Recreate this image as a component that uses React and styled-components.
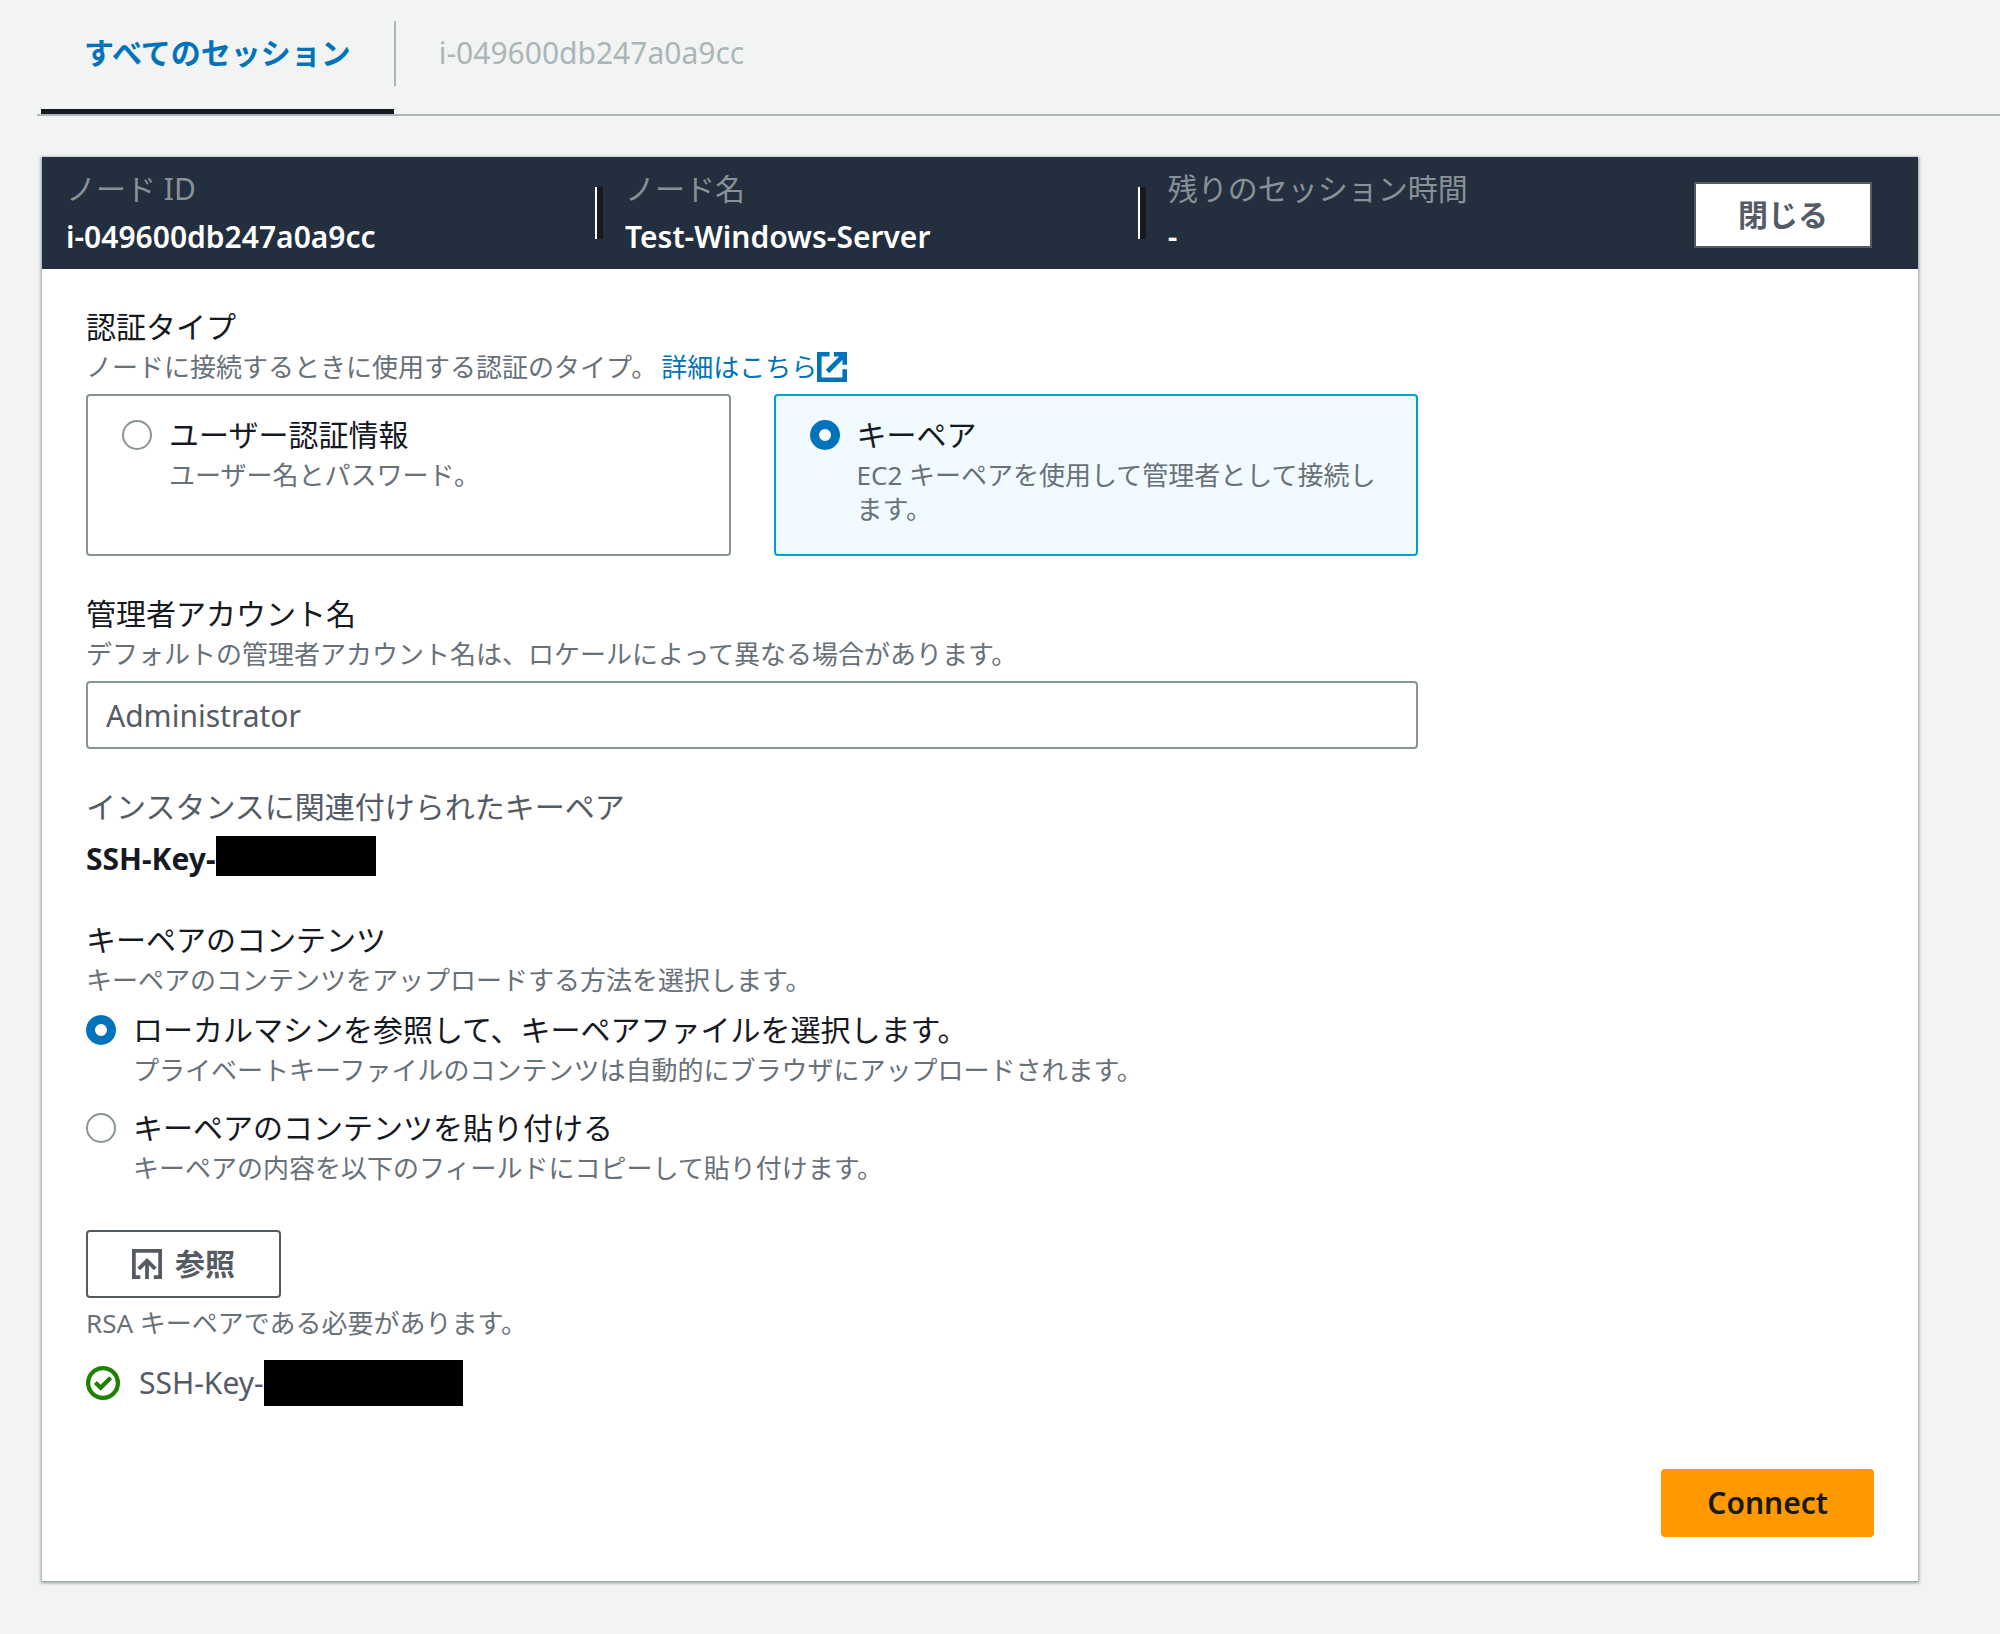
import React, { useState } from "react";
import styled, { createGlobalStyle } from "styled-components";

const palette = {
  page: "#f2f3f3",
  navy: "#232f3e",
  ink: "#16191f",
  body: "#545b64",
  muted: "#687078",
  line: "#aab7b8",
  field: "#879596",
  link: "#0073bb",
  select: "#00a1c9",
  selectBg: "#f1faff",
  orange: "#ff9900",
  green: "#1d8102",
};

const GlobalStyle = createGlobalStyle`
  * {
    box-sizing: border-box;
  }
  body {
    margin: 0;
    background: ${palette.page};
    color: ${palette.ink};
    font-family: "Noto Sans", "Noto Sans CJK JP", sans-serif;
    font-size: 30px;
    line-height: 46px;
  }
  button,
  input {
    font: inherit;
  }
`;

const Page = styled.div`
  min-height: 100vh;
  padding-bottom: 52px;
`;

const TabBar = styled.nav`
  display: flex;
  margin-left: 37px;
  padding-left: 4px;
  border-bottom: 2px solid ${palette.line};
`;

const Tab = styled.button`
  height: 114px;
  padding: 0 43px 3px;
  border: 0;
  border-bottom: 5px solid ${(props) => (props.$active ? palette.ink : "transparent")};
  background: none;
  color: ${(props) => (props.$active ? palette.link : palette.line)};
  font-weight: ${(props) => (props.$active ? 700 : 400)};
`;

const TabDivider = styled.span`
  width: 2px;
  height: 65px;
  margin-top: 21px;
  background: ${palette.line};
`;

const Panel = styled.section`
  margin: 41px 82px 0 42px;
  background: #fff;
  box-shadow: 0 1px 3px 1px rgba(0, 28, 36, 0.4);
`;

const PanelHeader = styled.header`
  display: grid;
  grid-template-columns: 39fr 40fr 41fr auto;
  align-items: center;
  height: 112px;
  padding: 0 46px 0 24px;
  background: ${palette.navy};
`;

const NodeItem = styled.div`
  display: flex;
  align-items: center;
  line-height: 48px;
`;

const Separator = styled.span`
  width: 8px;
  height: 52px;
  margin-right: 22px;
  border-left: 2px solid #fff;
  background: ${palette.ink};
`;

const NodeLabel = styled.div`
  color: #879196;
`;

const NodeValue = styled.div`
  color: #fff;
  font-weight: 600;
`;

const Button = styled.button`
  display: inline-flex;
  align-items: center;
  justify-content: center;
  gap: 13px;
  height: 68px;
  padding: 0 44px;
  border: 2px solid ${(props) => (props.$primary ? palette.orange : palette.body)};
  border-radius: 4px;
  background: ${(props) => (props.$primary ? palette.orange : "#fff")};
  color: ${(props) => (props.$primary ? palette.ink : palette.body)};
  font-weight: 600;
`;

const CloseButton = styled(Button)`
  height: 66px;
  margin-top: 4px;
  padding: 0 42px;
  border-radius: 0;
`;

const Form = styled.form`
  display: flex;
  flex-direction: column;
  padding: 35px 44px 44px;
`;

const Field = styled.div`
  width: 100%;
  max-width: 1332px;
  margin-bottom: 35px;
`;

const Title = styled.div`
  color: ${(props) => (props.$muted ? palette.body : palette.ink)};
`;

const Hint = styled.div`
  color: ${palette.muted};
  font-size: 26px;
  line-height: 34px;
`;

const HelpLink = styled.a`
  display: inline-flex;
  align-items: center;
  margin-left: 4px;
  color: ${palette.link};
  text-decoration: none;
`;

const Cards = styled.div`
  display: grid;
  grid-template-columns: 1fr 1fr;
  gap: 43px;
  margin-top: 10px;
`;

const Card = styled.label`
  display: flex;
  gap: 17px;
  min-height: 162px;
  padding: 16px 34px;
  border: 2px solid ${(props) => (props.$checked ? palette.select : palette.field)};
  border-radius: 4px;
  background: ${(props) => (props.$checked ? palette.selectBg : "#fff")};
`;

const Choice = styled.label`
  display: flex;
  gap: 17px;
  margin-top: ${(props) => (props.$first ? 10 : 18)}px;
`;

const Radio = styled.input.attrs({ type: "radio" })`
  appearance: none;
  flex: none;
  width: 30px;
  height: 30px;
  margin: 8px 0 0;
  border: 2px solid ${palette.field};
  border-radius: 50%;
  background: #fff;
  &:checked {
    border: 9px solid ${palette.link};
  }
`;

const TextInput = styled.input`
  display: block;
  width: 100%;
  height: 68px;
  margin-top: 10px;
  padding: 0 18px;
  border: 2px solid ${palette.field};
  border-radius: 4px;
  color: ${palette.body};
`;

const KeyName = styled.div`
  display: flex;
  margin-top: 6px;
  font-weight: 700;
`;

const Mask = styled.span`
  width: ${(props) => props.$width}px;
  height: ${(props) => props.$height}px;
  background: #000;
`;

const Upload = styled.div`
  display: flex;
  flex-direction: column;
  align-items: flex-start;
  gap: 8px;
  margin-top: 10px;
`;

const FileRow = styled.div`
  display: flex;
  align-items: center;
  margin-top: 20px;
  color: ${palette.body};
  svg {
    margin-right: 19px;
  }
`;

const Actions = styled.div`
  display: flex;
  justify-content: flex-end;
  margin-top: 63px;
`;

const Icon = styled.svg.attrs({ viewBox: "0 0 16 16", "aria-hidden": true })`
  flex: none;
  width: ${(props) => props.$size || 30}px;
  height: ${(props) => props.$size || 30}px;
  fill: none;
  stroke: currentColor;
  stroke-width: 2;
`;

const GreenIcon = styled(Icon)`
  color: ${palette.green};
`;

const nodeItems = [
  { label: "ノード ID", value: "i-049600db247a0a9cc" },
  { label: "ノード名", value: "Test-Windows-Server" },
  { label: "残りのセッション時間", value: "-" },
];

const authTypes = [
  { id: "user", title: "ユーザー認証情報", hint: "ユーザー名とパスワード。" },
  {
    id: "key",
    title: "キーペア",
    hint: "EC2 キーペアを使用して管理者として接続します。",
  },
];

const keySources = [
  {
    id: "file",
    title: "ローカルマシンを参照して、キーペアファイルを選択します。",
    hint: "プライベートキーファイルのコンテンツは自動的にブラウザにアップロードされます。",
  },
  {
    id: "paste",
    title: "キーペアのコンテンツを貼り付ける",
    hint: "キーペアの内容を以下のフィールドにコピーして貼り付けます。",
  },
];

const App = () => {
  const [authType, setAuthType] = useState("key");
  const [keySource, setKeySource] = useState("file");
  const [account, setAccount] = useState("Administrator");

  return (
    <Page>
      <GlobalStyle />
      <TabBar>
        <Tab type="button" $active>
          すべてのセッション
        </Tab>
        <TabDivider />
        <Tab type="button">i-049600db247a0a9cc</Tab>
      </TabBar>
      <Panel>
        <PanelHeader>
          {nodeItems.map((item, index) => (
            <NodeItem key={item.label}>
              {index > 0 && <Separator />}
              <div>
                <NodeLabel>{item.label}</NodeLabel>
                <NodeValue>{item.value}</NodeValue>
              </div>
            </NodeItem>
          ))}
          <CloseButton type="button">閉じる</CloseButton>
        </PanelHeader>
        <Form onSubmit={(e) => e.preventDefault()}>
          <Field role="radiogroup" aria-labelledby="auth-title">
            <Title id="auth-title">認証タイプ</Title>
            <Hint>
              ノードに接続するときに使用する認証のタイプ。
              <HelpLink href="#help">
                詳細はこちら
                <Icon>
                  <path
                    strokeWidth="2.5"
                    d="M6.7 1.2H1.2v13.6h13.6V9.2M9 1.2h5.8v5.6M14.6 1.4 5.6 10.4"
                  />
                </Icon>
              </HelpLink>
            </Hint>
            <Cards>
              {authTypes.map((type) => (
                <Card key={type.id} $checked={authType === type.id}>
                  <Radio
                    name="auth"
                    checked={authType === type.id}
                    onChange={() => setAuthType(type.id)}
                  />
                  <div>
                    <Title>{type.title}</Title>
                    <Hint>{type.hint}</Hint>
                  </div>
                </Card>
              ))}
            </Cards>
          </Field>
          <Field>
            <Title as="label" htmlFor="account">
              管理者アカウント名
            </Title>
            <Hint>
              デフォルトの管理者アカウント名は、ロケールによって異なる場合があります。
            </Hint>
            <TextInput
              id="account"
              type="text"
              value={account}
              onChange={(e) => setAccount(e.target.value)}
            />
          </Field>
          <Field>
            <Title $muted>インスタンスに関連付けられたキーペア</Title>
            <KeyName>
              SSH-Key-
              <Mask $width={160} $height={40} />
            </KeyName>
          </Field>
          <Field role="radiogroup" aria-labelledby="source-title">
            <Title id="source-title">キーペアのコンテンツ</Title>
            <Hint>キーペアのコンテンツをアップロードする方法を選択します。</Hint>
            {keySources.map((source, index) => (
              <Choice key={source.id} $first={index === 0}>
                <Radio
                  name="source"
                  checked={keySource === source.id}
                  onChange={() => setKeySource(source.id)}
                />
                <div>
                  <Title>{source.title}</Title>
                  <Hint>{source.hint}</Hint>
                </div>
              </Choice>
            ))}
          </Field>
          <Upload>
            <Button type="button">
              <Icon>
                <path d="M4.4 15H1V1h14v14h-3.4M8 16V6M3.6 10.6 8 6.2l4.4 4.4" />
              </Icon>
              参照
            </Button>
            <Hint>RSA キーペアである必要があります。</Hint>
          </Upload>
          <FileRow>
            <GreenIcon $size={34}>
              <circle cx="8" cy="8" r="7" />
              <path d="m4.4 7.8 2.5 2.4 4.7-4.7" />
            </GreenIcon>
            SSH-Key-
            <Mask $width={199} $height={46} />
          </FileRow>
          <Actions>
            <Button type="submit" $primary>
              Connect
            </Button>
          </Actions>
        </Form>
      </Panel>
    </Page>
  );
};

export default App;
